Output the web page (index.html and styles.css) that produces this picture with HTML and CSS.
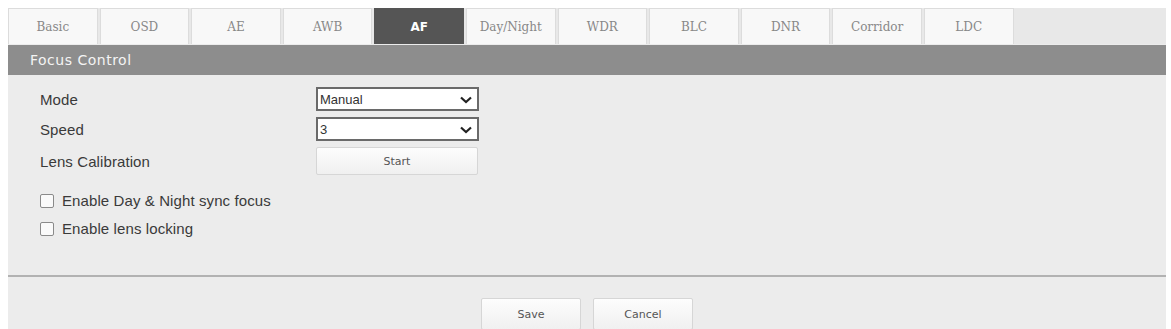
FILE: index.html
```html
<!DOCTYPE html>
<html lang="en">
<head>
    <meta charset="UTF-8">
    <title>Image - AF</title>
    <link rel="stylesheet" href="styles.css">
</head>
<body>

<div class="panel">
    <div class="tabs">
        <div class="tab">Basic</div>
        <div class="tab">OSD</div>
        <div class="tab">AE</div>
        <div class="tab">AWB</div>
        <div class="tab active">AF</div>
        <div class="tab">Day/Night</div>
        <div class="tab">WDR</div>
        <div class="tab">BLC</div>
        <div class="tab">DNR</div>
        <div class="tab">Corridor</div>
        <div class="tab">LDC</div>
    </div>

    <div class="section-title">Focus Control</div>

    <div class="content">
        <div class="row">
            <label class="label">Mode</label>
            <div class="select">
                <span>Manual</span>
                <svg class="arrow" viewBox="0 0 12 8" width="12" height="8"><path d="M1 1.5 L6 6 L11 1.5" fill="none" stroke="#222" stroke-width="2.2"/></svg>
            </div>
        </div>
        <div class="row">
            <label class="label">Speed</label>
            <div class="select">
                <span>3</span>
                <svg class="arrow" viewBox="0 0 12 8" width="12" height="8"><path d="M1 1.5 L6 6 L11 1.5" fill="none" stroke="#222" stroke-width="2.2"/></svg>
            </div>
        </div>
        <div class="row row-btn">
            <label class="label">Lens Calibration</label>
            <button class="btn btn-wide">Start</button>
        </div>

        <div class="checks">
            <label class="check"><span class="box"></span>Enable Day &amp; Night sync focus</label>
            <label class="check"><span class="box"></span>Enable lens locking</label>
        </div>
    </div>

    <div class="footer">
        <button class="btn">Save</button>
        <button class="btn">Cancel</button>
    </div>
</div>

</body>
</html>
```

FILE: styles.css
```css
* { box-sizing: border-box; }
body { margin: 0; background: #fff; font-family: "Liberation Sans", Arial, sans-serif; overflow: hidden; }
.panel { margin: 8px 5px 0 8px; background: #ececec; }

.tabs { display: flex; gap: 2px; height: 36px; background: #e8e8e8; }
.tab { width: 89.6px; border: 1px solid #dcdcdc; border-bottom: none; background: #f8f8f8; display: flex; align-items: center; justify-content: center; font-family: "DejaVu Serif", serif; font-size: 12px; color: #888; }
.tab.active { background: #555; border-color: #555; color: #fff; font-family: "DejaVu Sans", sans-serif; font-weight: bold; font-size: 12px; }

.section-title { margin-top: 1px; height: 30px; background: #8d8d8d; color: #f4f4f4; font-family: "DejaVu Sans", sans-serif; font-size: 14px; letter-spacing: 0.5px; display: flex; align-items: center; padding-left: 22px; }

.content { height: 202px; padding: 12px 0 0 32px; border-bottom: 2px solid #b2b2b2; }
.row { display: flex; align-items: center; height: 24px; margin-bottom: 6px; }
.row-btn { height: 28px; margin-top: 2px; }
.label { width: 276px; font-size: 15px; color: #3a3a3a; letter-spacing: 0.1px; }
.select { width: 163px; height: 24px; border: 2px solid #6a6a6a; background: #fff; display: flex; align-items: center; justify-content: space-between; padding: 0 5px 0 2px; font-size: 13px; color: #333; }
.select .arrow { margin-top: 1px; }

.btn { height: 28px; width: 100px; border: 1px solid #d6d6d6; border-radius: 2px; background: linear-gradient(#fdfdfd, #f0f0f0); font-family: "DejaVu Sans", sans-serif; font-size: 11px; color: #555; padding: 0; }
.btn-wide { width: 162px; }

.checks { margin-top: 17px; display: flex; flex-direction: column; gap: 11px; }
.check { display: flex; align-items: center; font-size: 15px; color: #3a3a3a; letter-spacing: 0.1px; }
.box { width: 14px; height: 14px; border: 1px solid #8a8a8a; border-radius: 2px; background: #fafafa; margin-right: 8px; }

.footer { height: 53px; display: flex; justify-content: center; align-items: flex-start; gap: 12px; padding-top: 21px; }
.footer .btn { height: 32px; }
```
